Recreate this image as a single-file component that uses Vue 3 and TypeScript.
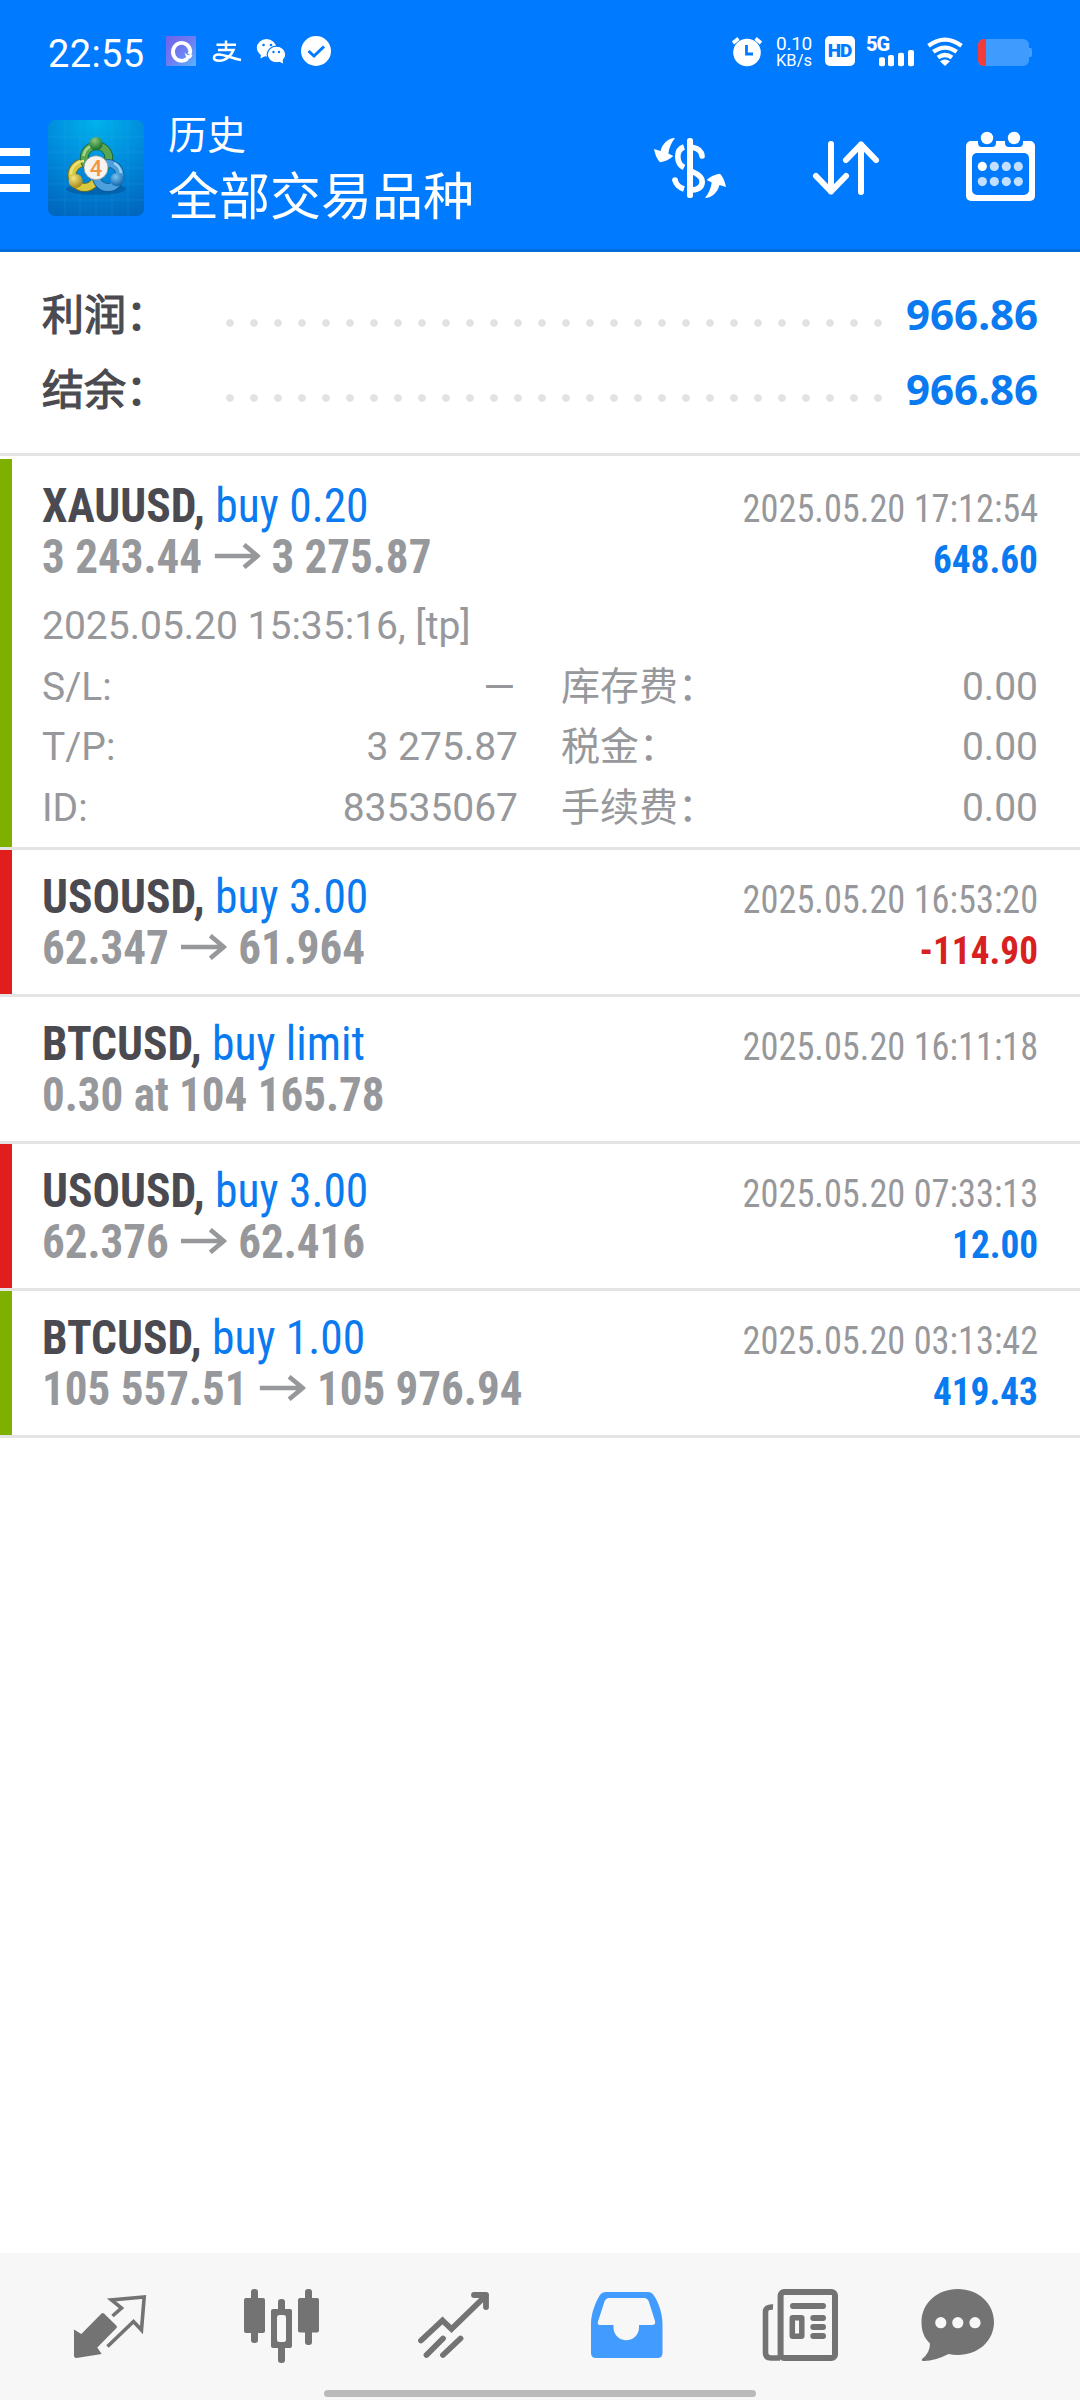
<script setup lang="ts">
interface Deal {
  symbol: string
  action: string
  from: string
  to?: string
  time: string
  profit?: string
  loss?: boolean
  bar?: 'tp' | 'sl'
  details?: {
    opened: string
    rows: [string, string, string, string][]
  }
}

const totals = [
  { label: '利润：', value: '966.86' },
  { label: '结余：', value: '966.86' },
]

const deals: Deal[] = [
  {
    symbol: 'XAUUSD,', action: 'buy 0.20', from: '3 243.44', to: '3 275.87',
    time: '2025.05.20 17:12:54', profit: '648.60', bar: 'tp',
    details: {
      opened: '2025.05.20 15:35:16, [tp]',
      rows: [
        ['S/L:', '–', '库存费：', '0.00'],
        ['T/P:', '3 275.87', '税金：', '0.00'],
        ['ID:', '83535067', '手续费：', '0.00'],
      ],
    },
  },
  { symbol: 'USOUSD,', action: 'buy 3.00', from: '62.347', to: '61.964', time: '2025.05.20 16:53:20', profit: '-114.90', loss: true, bar: 'sl' },
  { symbol: 'BTCUSD,', action: 'buy limit', from: '0.30 at 104 165.78', time: '2025.05.20 16:11:18' },
  { symbol: 'USOUSD,', action: 'buy 3.00', from: '62.376', to: '62.416', time: '2025.05.20 07:33:13', profit: '12.00', bar: 'sl' },
  { symbol: 'BTCUSD,', action: 'buy 1.00', from: '105 557.51', to: '105 976.94', time: '2025.05.20 03:13:42', profit: '419.43', bar: 'tp' },
]

const calendarDots = [0, 1, 2, 3, 4, 5, 6, 7]
</script>

<template>
  <div class="screen">
    <header class="top">
      <div class="status">
        <span class="clock">22:55</span>
        <svg class="left-icons" width="176" height="40" viewBox="160 31 176 40">
          <defs>
            <linearGradient id="q" x1="0" y1="0" x2="1" y2="1">
              <stop offset="0" stop-color="#6f63e8" /><stop offset=".5" stop-color="#6f7cf2" /><stop offset="1" stop-color="#58b4ff" />
            </linearGradient>
          </defs>
          <rect x="166" y="36" width="30" height="30" fill="url(#q)" />
          <path d="M187.500 58.500A8.700 9 0 1 1 190.300 51Q190.300 53 189.300 54.500" fill="none" stroke="#fff" stroke-width="3.800" />
          <path d="M184.500 52.500Q187.500 56.500 192.500 54.500Q191.500 59 187 59.500" fill="#fff" />
          <path d="M216.500 44.800H236M226 40.500V49.500M218 50H233.500C231.500 55 226 60.800 219.500 60.800C212 60.800 212.500 54.500 218.500 54.500C225 54.500 232 58.500 241 60" fill="none" stroke="#fff" stroke-width="2.500" />
          <ellipse cx="266.500" cy="47.800" rx="9.700" ry="8.700" fill="#fff" />
          <path d="M261 53L260.500 58.500L267 55Z" fill="#fff" />
          <ellipse cx="276.500" cy="54.500" rx="9.300" ry="8.300" fill="#fff" stroke="#007aff" stroke-width="1.200" />
          <path d="M278 61L283 63.500L282.500 58Z" fill="#fff" />
          <g fill="#007aff"><circle cx="263.500" cy="45" r="1.300" /><circle cx="271" cy="45" r="1.300" /><circle cx="273.500" cy="52" r="1.200" /><circle cx="279" cy="52" r="1.200" /></g>
          <circle cx="316" cy="51" r="15" fill="#fff" />
          <path d="M308.500 51L314 56L324 46.500" fill="none" stroke="#007aff" stroke-width="3" />
        </svg>
        <div class="right-icons">
          <svg width="32" height="40" viewBox="731 31 32 40">
            <circle cx="747" cy="52.500" r="13.800" fill="#fff" />
            <path d="M733 43L738.500 38.500M761 43L755.500 38.500" stroke="#fff" stroke-width="3.600" />
            <path d="M746.500 45V54H753" fill="none" stroke="#007aff" stroke-width="2.800" />
          </svg>
          <div class="speed"><span>0.10</span><span class="unit">KB/s</span></div>
          <div class="hd">HD</div>
          <div class="cell">
            <span class="gen">5G</span>
            <svg width="48" height="40" viewBox="867 31 48 40" fill="#fff">
              <rect x="879" y="57.300" width="6" height="9" rx="2" /><rect x="888" y="55" width="6" height="11.300" rx="2" />
              <rect x="898" y="52.700" width="6" height="13.600" rx="2" /><rect x="908" y="50" width="6" height="16.300" rx="2" />
            </svg>
          </div>
          <svg class="wifi" width="38" height="40" viewBox="926 31 38 40">
            <g fill="none" stroke="#fff" stroke-width="4.200">
              <path d="M928.500 45.800Q945 33.500 961.500 45.800" /><path d="M933.300 51.800Q945 43.300 956.700 51.800" /><path d="M938 57.500Q945 52.500 952 57.500" />
            </g>
            <path d="M940 61.300Q945 57.500 950 61.300L945 66Z" fill="#fff" />
          </svg>
          <svg class="battery" width="56" height="40" viewBox="977 31 56 40">
            <defs><clipPath id="cellfill"><rect x="978" y="39" width="51" height="27" rx="6" /></clipPath></defs>
            <path d="M1029 48h1.500q1.500 0 1.500 2v5q0 2-1.500 2h-1.500z" fill="#449dff" />
            <g clip-path="url(#cellfill)"><rect x="978" y="39" width="51" height="27" fill="#409bff" /><rect x="978" y="39" width="8" height="27" fill="#f23c3c" /></g>
          </svg>
        </div>
      </div>

      <div class="bar">
        <div class="burger"><i /><i /><i /></div>
        <svg class="logo" width="96" height="96" viewBox="0 0 96 96">
          <defs>
            <radialGradient id="bg" cx=".5" cy="0" r="1.050"><stop offset="0" stop-color="#00b2ec" /><stop offset=".5" stop-color="#008bdc" /><stop offset="1" stop-color="#0067be" /></radialGradient>
            <radialGradient id="gr" cx=".4" cy=".25" r=".7"><stop offset="0" stop-color="#8cc878" /><stop offset="1" stop-color="#1c7434" /></radialGradient>
            <radialGradient id="ye" cx=".35" cy=".3" r=".7"><stop offset="0" stop-color="#f4e67e" /><stop offset="1" stop-color="#a58c1a" /></radialGradient>
            <radialGradient id="bl" cx=".4" cy=".3" r=".7"><stop offset="0" stop-color="#7cc4f0" /><stop offset="1" stop-color="#1268b0" /></radialGradient>
          </defs>
          <rect width="96" height="96" rx="7" fill="url(#bg)" />
          <path d="M0 17H96M0 32H96M0 48H96M0 64H96M0 80H96M17 0V96M32 0V96M48 0V96M64 0V96M80 0V96" stroke="#55c8f4" stroke-opacity=".16" stroke-width=".8" />
          <ellipse cx="48" cy="69" rx="30" ry="6" fill="#00427f" opacity=".4" />
          <g fill="none">
            <circle cx="36.500" cy="55" r="12.500" stroke="#756c16" stroke-width="8.600" /><circle cx="36.500" cy="55" r="12.500" stroke="#d8c93e" stroke-width="7" />
            <circle cx="48.500" cy="38" r="12.300" stroke="#186030" stroke-width="8.600" /><circle cx="48.500" cy="38" r="12.300" stroke="#5aa552" stroke-width="7" />
            <circle cx="60" cy="55.500" r="12" stroke="#135890" stroke-width="8.600" /><circle cx="60" cy="55.500" r="12" stroke="#4ca0dc" stroke-width="7" />
            <path d="M23 54.500A13.700 13.700 0 0 1 36 41" stroke="#ece178" stroke-width="2.500" />
            <path d="M35.500 36A13.300 13.300 0 0 1 43 26" stroke="#a4d88c" stroke-width="2.500" />
            <path d="M66 43A13.200 13.200 0 0 1 73 53" stroke="#9ad2f5" stroke-width="2.500" />
          </g>
          <circle cx="48" cy="23.700" r="6.700" fill="url(#gr)" /><circle cx="27.700" cy="61" r="7" fill="url(#ye)" /><circle cx="69" cy="59.500" r="6.700" fill="url(#bl)" />
          <circle cx="48" cy="47.700" r="12" fill="#f6f3f0" stroke="#8f9488" stroke-width=".7" />
          <text x="48" y="55.500" text-anchor="middle" font-family="Roboto, sans-serif" font-size="22" font-weight="500" fill="#f39440">4</text>
        </svg>
        <div class="titles">
          <div class="sub">历史</div>
          <div class="main">全部交易品种</div>
        </div>
        <svg class="actions" width="400" height="132" viewBox="650 120 400 132">
          <rect x="687" y="138" width="6" height="60" rx="2.500" fill="#fff" />
          <g fill="none" stroke="#fff" stroke-width="5.600">
            <path d="M684 147C679.500 148.500 677.800 152 677.800 156.500C677.800 161.500 680 165.500 684 167.500" />
            <path d="M693 147.500C698.500 148.500 701.500 151.500 702 156" stroke-linecap="round" />
            <path d="M692 171.500C699 174.500 702.200 177.500 702.200 181.500C702.200 187 698.500 189.500 692 190" />
            <path d="M675 180C676 184.500 679 187.500 684 189" />
            <path d="M675 180V180" stroke-linecap="round" />
          </g>
          <g fill="#fff">
            <path id="swap" d="M675 138C668 138.300 662.500 143.500 660.500 151L654 149Q655.700 158 660 162.300Q667.500 161.500 673.300 156L668.300 153.500Q669.500 145 675 138Z" />
            <use href="#swap" transform="rotate(180 690 168)" />
          </g>
          <g fill="none" stroke="#fff" stroke-width="6" stroke-linecap="round" stroke-linejoin="round">
            <path d="M831 144V191.500M816 176L831 191.500L846 176" /><path d="M861 192V144.500M846 160L861 144.500L876 160" />
          </g>
          <rect x="966" y="141" width="69" height="60" rx="5" fill="#fff" />
          <g fill="#007aff"><path d="M978 140h18v3q0 4-4 4h-10q-4 0-4-4zM1005 140h18v3q0 4-4 4h-10q-4 0-4-4z" /><rect x="972" y="153" width="57" height="42" rx="5" /></g>
          <circle cx="987" cy="138" r="6.200" fill="#fff" /><circle cx="1014" cy="138" r="6.200" fill="#fff" />
          <circle v-for="n in calendarDots" :key="n" :cx="982.3 + (n % 4) * 12" :cy="n < 4 ? 166.4 : 181.6" r="4.600" :fill="n ? '#c2dfff' : '#fff'" />
        </svg>
      </div>
    </header>

    <section class="totals">
      <div v-for="t in totals" :key="t.label" class="total">
        <span class="label">{{ t.label }}</span><span class="dots" /><span class="value">{{ t.value }}</span>
      </div>
    </section>

    <main>
      <article v-for="d in deals" :key="d.time" class="deal" :class="d.bar">
        <div class="line">
          <div class="cond title"><b>{{ d.symbol }}</b> <span class="action">{{ d.action }}</span></div>
          <div class="cond time">{{ d.time }}</div>
        </div>
        <div class="line">
          <div class="cond price">
            {{ d.from }}<template v-if="d.to"><svg class="arrow" width="49" height="26" viewBox="0 0 46 26" preserveAspectRatio="none"><path d="M0 13H43M29.500 1.700L43 13L29.500 24.300" fill="none" stroke="currentColor" stroke-width="4.600" /></svg>{{ d.to }}</template>
          </div>
          <div v-if="d.profit" class="cond profit" :class="{ loss: d.loss }">{{ d.profit }}</div>
        </div>
        <div v-if="d.details" class="details">
          <div class="row">{{ d.details.opened }}</div>
          <div v-for="r in d.details.rows" :key="r[0]" class="row grid">
            <span>{{ r[0] }}</span><span class="num"><span :class="{ dash: r[1] === '–' }">{{ r[1] }}</span></span><span class="second">{{ r[2] }}</span><span class="num">{{ r[3] }}</span>
          </div>
        </div>
      </article>
    </main>

    <nav class="tabs">
      <svg viewBox="24 13 172 147">
        <path d="M74 89.500L81.300 94L101.500 73.500Q102.800 72.300 104 73.500L116.500 85.700Q117.500 87 116.500 88L97.300 107.500L101.700 114L76.500 118Q74 118 74 115.500Z" />
        <path d="M112.500 76L121.500 68L111.500 60L144.200 57L141.500 90L133.500 81.500L107.500 106.500" fill="none" stroke="#737373" stroke-width="3.600" />
      </svg>
      <svg viewBox="196 13 172 147">
        <rect x="251" y="49" width="7" height="54" rx="3" /><rect x="244" y="58" width="21" height="35" rx="2" />
        <rect x="278" y="59" width="7" height="64" rx="3" /><rect x="271" y="69" width="21" height="39" rx="2" />
        <rect x="277" y="75" width="9" height="27" rx="2.500" fill="#f7f7f7" />
        <rect x="305" y="49" width="7" height="56" rx="3" /><rect x="298" y="58" width="21" height="34.500" rx="2" />
      </svg>
      <svg viewBox="368 13 172 147">
        <g fill="none" stroke="#737373" stroke-width="5.800" stroke-linecap="round">
          <path d="M421 100.500L442.500 80.500L451.500 89L486 55.500" /><path d="M474 55H486V67" stroke-linejoin="round" />
          <path d="M426.500 115L443 98.500M443 115L460.500 98.500" />
        </g>
      </svg>
      <svg viewBox="540 13 172 147">
        <path fill="#429bff" d="M591 84C591 73 596 61 600 55Q602 52 606 52H648Q651.500 52 653.500 55C658 61 662.500 73 662.500 84V113Q662.500 118 657.500 118H596Q591 118 591 113Z" />
        <path fill="#f7f7f7" d="M609 58H644Q647.500 58 648.800 61.500L655 81Q656 85 652 85H639V87.500A12.700 12.700 0 0 1 613.500 87.500V85H600Q597 85 598 81.500L604.500 61.500Q606 58 609 58Z" />
      </svg>
      <svg viewBox="712 13 172 147">
        <g fill="none" stroke="#737373" stroke-width="6">
          <rect x="780.600" y="52" width="54.400" height="66" rx="3.500" /><path d="M773 67Q765.500 66.500 765.500 72V112.500Q765.500 118 771 118H780" stroke-width="5.600" />
          <path d="M793 66H823M813.300 78H823M813.300 87H823M813.300 96H823" stroke-linecap="round" /><rect x="792.300" y="77.700" width="9.500" height="18.600" rx=".5" stroke-width="5.500" />
        </g>
      </svg>
      <svg viewBox="884 13 172 147">
        <path d="M957.800 49C978 49 994 63 994 82C994 101 978 115 957.800 115Q953 115 948.500 114Q935 121 924 121Q921 121 922 119Q930 113 930 103.500C924 98 921.500 91 921.500 82C921.500 63 937.500 49 957.800 49Z" />
        <g fill="#f7f7f7"><circle cx="940.800" cy="82.700" r="5.600" /><circle cx="957.800" cy="82.700" r="5.600" /><circle cx="975" cy="82.700" r="5.600" /></g>
      </svg>
      <div class="home" />
    </nav>
  </div>
</template>

<style>
body { margin: 0; background: #fff; }
</style>

<style scoped>
.screen { width: 1080px; height: 2400px; display: flex; flex-direction: column; background: #fff; font-family: Roboto, "Noto Sans CJK SC", sans-serif; overflow: hidden; }
.top { height: 249px; flex: none; background: #007aff; border-bottom: 3px solid #066cdb; color: #fff; }
.status { height: 71px; padding: 31px 47px 0 48px; box-sizing: border-box; display: flex; }
.clock { width: 112px; font-size: 38px; line-height: 46px; letter-spacing: .4px; }
.right-icons { margin-left: auto; display: flex; height: 40px; }
.speed { width: 36px; margin-left: 13px; padding-top: 3px; display: flex; flex-direction: column; align-items: center; font-size: 19px; line-height: 19px; letter-spacing: -.3px; }
.unit { font-size: 16.500px; line-height: 15px; letter-spacing: 0; }
.hd { width: 30px; height: 30px; margin: 5px 12px 0 13px; border-radius: 5px; background: #fff; color: #007aff; font: 900 19px/30px Roboto, sans-serif; text-align: center; letter-spacing: -1px; text-indent: -1px; }
.cell { position: relative; width: 48px; }
.gen { position: absolute; left: -1px; top: 1px; font-size: 20px; line-height: 24px; font-weight: 800; letter-spacing: -1px; }
.wifi { margin-left: 11px; }
.battery { margin-left: 13px; }
.bar { display: flex; align-items: flex-start; height: 178px; }
.burger { width: 30px; margin-top: 77px; display: flex; flex-direction: column; gap: 10px; }
.burger i { height: 8px; background: #fff; }
.logo { margin: 49px 24px 0 18px; }
.titles { padding-top: 37px; }
.sub { font-size: 39px; line-height: 57px; }
.main { font-size: 51px; line-height: 65px; }
.actions { margin: 49px 30px 0 auto; }

.totals { flex: none; height: 204px; box-sizing: border-box; padding: 24px 42px 0; border-bottom: 3px solid #e4e4e4; margin-bottom: 3px; }
.total { height: 75px; display: flex; align-items: baseline; line-height: 75px; font-size: 42px; }
.label { width: 176px; color: #4a4a50; font-weight: 400; -webkit-text-stroke: 1.200px #4a4a50; }
.dots { width: 672px; height: 10px; align-self: flex-start; margin-top: 42px; background: radial-gradient(circle at 12px 5px, #e2e2e2 3.400px, transparent 4.200px) 0 0 / 24px 10px; }
.value { margin-left: auto; font-family: "Noto Sans", sans-serif; font-weight: 700; color: #0a7af0; }

.deal { border-bottom: 3px solid #e4e4e4; position: relative; padding: 21px 42px 21px; }
.deal.tp::before, .deal.sl::before { content: ""; position: absolute; left: 0; top: 0; bottom: 0; width: 12px; background: #7eb000; }
.deal.sl::before { background: #e11e1e; }
.line { display: flex; justify-content: space-between; align-items: baseline; height: 51px; line-height: 51px; font-size: 48px; }
.cond { font-stretch: 75%; white-space: nowrap; transform-origin: 0 50%; }
.title { transform: scaleX(.948); }
.line b { color: #4a4a50; }
.action { color: #0a7af0; }
.time { font-size: 39px; color: #97989b; transform: scaleX(.932); transform-origin: 100% 50%; }
.price { font-weight: 700; color: #97989b; transform: scaleX(.938); }
.arrow { margin: 0 12px 0 13px; vertical-align: 4px; }
.profit { font-size: 39px; font-weight: 700; color: #0a7af0; transform: scaleX(.955); transform-origin: 100% 50%; }
.loss { color: #d81f22; }
.details { margin-top: 14px; margin-bottom: -12.800px; color: #97989b; font-size: 39px; }
.row { height: 60.700px; line-height: 61px; }
.grid { display: grid; grid-template-columns: 176px 300px 220px 300px; }
.num { text-align: right; }
.dash { display: inline-block; transform: scaleX(1.4); transform-origin: 100% 50%; }
.second { padding-left: 43px; }

.tabs { position: relative; margin-top: auto; flex: none; height: 147px; padding: 0 24px; background: #f7f7f7; display: flex; }
.tabs svg { width: 172px; height: 147px; fill: #737373; }
.home { position: absolute; left: 324px; bottom: 3px; width: 432px; height: 7px; border-radius: 4px; background: #bababa; }
</style>
